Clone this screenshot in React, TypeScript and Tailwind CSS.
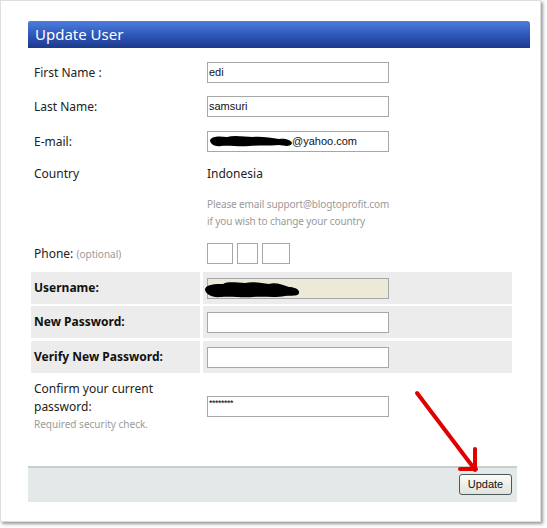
import React from "react";

const labelFont = { fontFamily: '"Noto Sans", "DejaVu Sans", sans-serif' };
const inputFont = { fontFamily: '"Liberation Sans", Arial, sans-serif' };

function Input({ children, beige }: { children?: React.ReactNode; beige?: boolean }) {
  return (
    <div
      className={`relative flex h-[21px] w-[182px] items-center border border-[#a7a7a7] pl-[1px] text-[11px] text-[#111] ${beige ? "bg-[#ece9d8]" : "bg-white"}`}
      style={inputFont}
    >
      {children}
    </div>
  );
}

function Row({ label, children, className = "" }: { label: React.ReactNode; children?: React.ReactNode; className?: string }) {
  return (
    <div className={`flex ${className}`}>
      <div className="flex w-[169px] items-center pl-[3px] text-[12px] text-[#222]">{label}</div>
      <div className="ml-[3px] flex flex-1 items-center pl-[4px]">{children}</div>
    </div>
  );
}

function GrayRow({ label, children, className = "" }: { label: React.ReactNode; children?: React.ReactNode; className?: string }) {
  return (
    <div className={`flex h-[32px] ${className}`}>
      <div className="flex w-[169px] items-center bg-[#ececec] pl-[3px] text-[12px] font-bold text-[#111]">{label}</div>
      <div className="ml-[3px] flex flex-1 items-center bg-[#ececec] pl-[4px]">{children}</div>
    </div>
  );
}

export default function App() {
  return (
    <div className="relative h-[528px] w-[547px] bg-white" style={labelFont}>
      <div className="h-[522px] w-[541px] border border-[#dedede] bg-white shadow-[2px_2px_3px_rgba(0,0,0,0.4)]">
        {/* header */}
        <div className="ml-[27px] mt-[20px] flex h-[27px] w-[502px] items-center rounded-tr-[3px] rounded-tl-[2px] bg-gradient-to-b from-[#4d7de0] via-[#2f58bb] to-[#1c398b] pl-[7px] text-[15px] text-white">
          Update User
        </div>

        <div className="ml-[30px] flex w-[481px] flex-col">
          <Row label="First Name :" className="mt-[14px] h-[21px]">
            <Input>edi</Input>
          </Row>
          <Row label="Last Name:" className="mt-[13px] h-[21px]">
            <Input>samsuri</Input>
          </Row>
          <Row label="E-mail:" className="mt-[14px] h-[21px]">
            <Input>
              <svg width="84" height="14" viewBox="0 0 84 14" className="shrink-0">
                <path
                  d="M1 5 C3 1 10 1 18 2 C26 0 36 2 44 2 C52 1 62 3 70 4 C76 3 82 5 83 8 C82 12 76 11 70 10 C60 11 50 10 40 11 C30 12 20 10 12 11 C6 12 1 9 1 5 Z"
                  fill="#000"
                />
              </svg>
              <span className="-ml-[1px]">@yahoo.com</span>
            </Input>
          </Row>
          <Row label="Country" className="mt-[14px] h-[16px]">
            <span className="text-[12px] text-[#222]">Indonesia</span>
          </Row>
          <Row label="" className="mt-[14px]">
            <div className="text-[10px] leading-[17px] tracking-[-0.12px] text-[#9a9a9a]">
              <div>Please email support@blogtoprofit.com</div>
              <div>if you wish to change your country</div>
            </div>
          </Row>
          <Row
            label={
              <span>
                Phone: <span className="text-[10px] text-[#9a9a9a]">(optional)</span>
              </span>
            }
            className="mt-[13px] h-[21px]"
          >
            <div className="flex gap-[4px]">
              <div className="h-[21px] w-[26px] border border-[#a7a7a7] bg-white" />
              <div className="h-[21px] w-[21px] border border-[#a7a7a7] bg-white" />
              <div className="h-[21px] w-[28px] border border-[#a7a7a7] bg-white" />
            </div>
          </Row>

          <GrayRow label="Username:" className="mt-[8px]">
            <Input beige>
              <svg width="98" height="18" viewBox="0 0 98 18" className="-ml-[6px] mt-[4px] shrink-0">
                <path
                  d="M2 8 C4 3 12 3 20 3 C26 0 34 2 42 2 C50 0 58 2 66 3 C72 1 80 4 86 6 C92 6 97 9 96 12 C95 16 88 14 82 15 C72 17 60 15 50 16 C40 17 28 15 18 16 C9 17 2 13 2 8 Z"
                  fill="#000"
                />
              </svg>
            </Input>
          </GrayRow>
          <GrayRow label="New Password:" className="mt-[2px]">
            <Input />
          </GrayRow>
          <GrayRow label="Verify New Password:" className="mt-[3px]">
            <Input />
          </GrayRow>

          <Row
            label={
              <div className="text-[12px] text-[#222]">
                <div className="leading-[18px]">Confirm your current</div>
                <div className="leading-[18px]">password:</div>
                <div className="text-[10px] leading-[17px] text-[#9a9a9a]">Required security check.</div>
              </div>
            }
            className="mt-[7px]"
          >
            <div className="relative h-[21px] w-[182px] border border-[#a7a7a7] bg-white">
              <span className="absolute left-[1px] top-[2px] text-[9px] leading-[9px] tracking-[-0.5px] text-[#000]" style={inputFont}>
                ********
              </span>
            </div>
          </Row>
        </div>

        {/* footer */}
        <div className="ml-[27px] mt-[33px] flex h-[36px] w-[489px] items-start justify-end border-t-2 border-[#c9cdcd] bg-[#e3e8e8] pr-[5px] pt-[6px]">
          <button
            className="h-[21px] w-[53px] rounded-[3px] border border-[#4a5a5a] bg-gradient-to-b from-[#fbfbf8] to-[#e3e3dc] text-[11px] text-[#111]"
            style={inputFont}
          >
            Update
          </button>
        </div>
      </div>

      {/* red arrow annotation */}
      <svg className="pointer-events-none absolute left-0 top-0" width="547" height="528">
        <g stroke="#e00000" strokeWidth="4" strokeLinecap="round" fill="none">
          <line x1="417" y1="393" x2="473" y2="467" />
          <line x1="475" y1="449" x2="475" y2="470" />
          <line x1="460" y1="469" x2="476" y2="469" />
        </g>
      </svg>
    </div>
  );
}
